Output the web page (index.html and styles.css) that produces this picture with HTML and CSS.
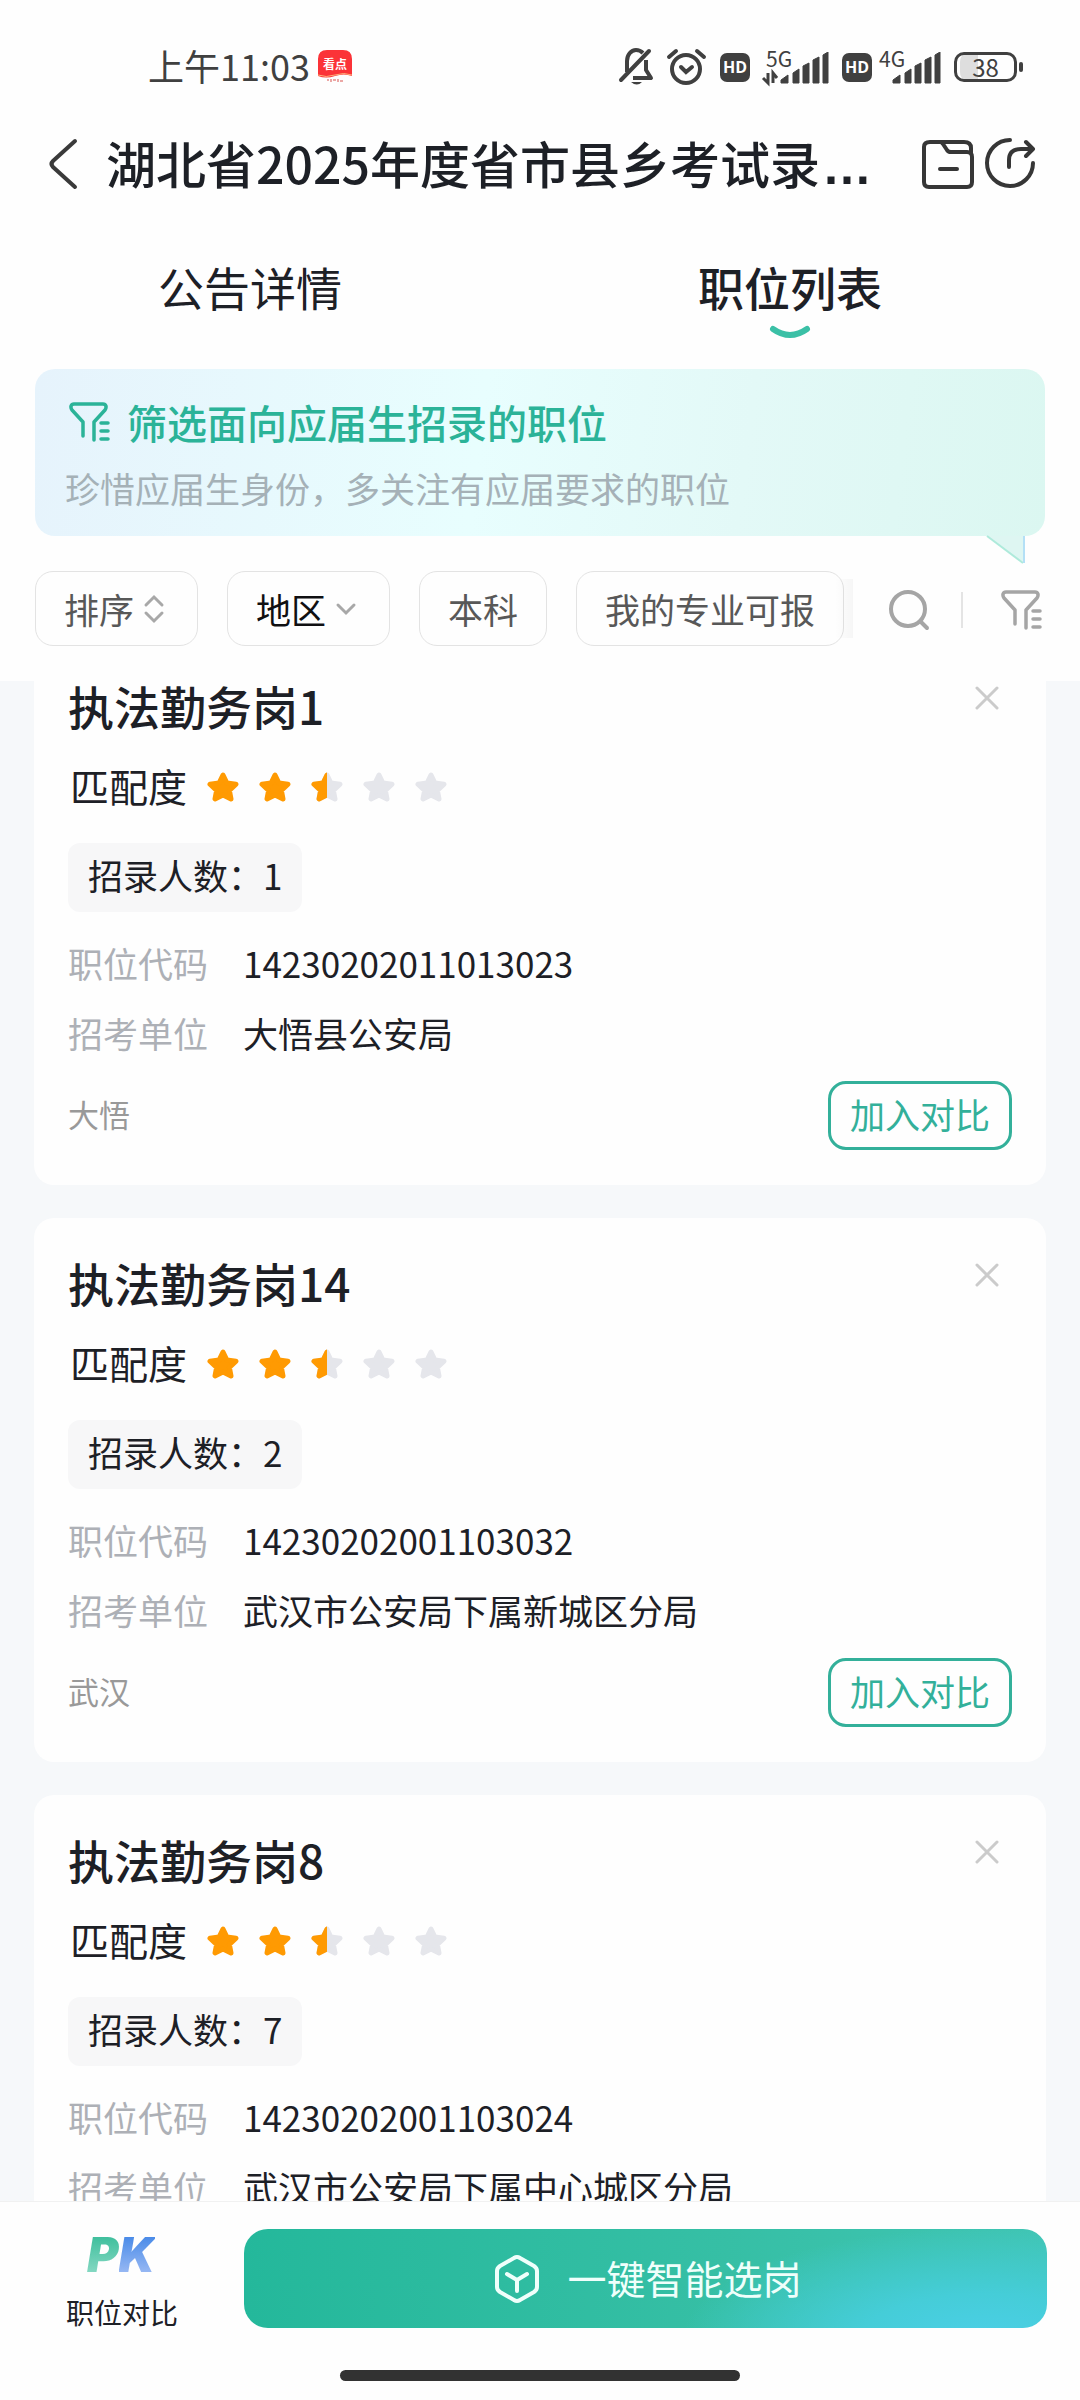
FILE: index.html
```html
<!DOCTYPE html>
<html lang="zh-CN">
<head>
<meta charset="utf-8">
<meta name="viewport" content="width=device-width, initial-scale=1">
<title>职位列表</title>
<link rel="stylesheet" href="styles.css">
</head>
<body>
<svg class="defs" aria-hidden="true">
  <defs>
    <symbol id="star" viewBox="0 0 32 32"><path d="M16 4l3.900 8 9.100 1.200-6.600 6.300 1.600 8.500-8-4-8 4 1.600-8.500L3 13.200l9.100-1.200z" fill="currentColor" stroke="currentColor" stroke-width="5" stroke-linejoin="round"/></symbol>
    <symbol id="half-star" viewBox="0 0 32 32">
      <clipPath id="left-half"><rect width="16" height="32"/></clipPath>
      <use href="#star" width="32" height="32" color="#e5e6eb"/>
      <use href="#star" width="32" height="32" color="#ff9a02" clip-path="url(#left-half)"/>
    </symbol>
    <symbol id="close" viewBox="0 0 24 24"><path d="M2 2l20 20M22 2L2 22" fill="none" stroke="#cbcbcb" stroke-width="3" stroke-linecap="round"/></symbol>
    <symbol id="filter" viewBox="0 0 42 40"><path d="M14 34V20L3 8C1 5 2 2 5 2h29c3 0 4 3 2 6l-11 12v18M32 21h7M32 29h7M32 37h7" fill="none" stroke="currentColor" stroke-width="3.500" stroke-linecap="round" stroke-linejoin="round"/></symbol>
    <symbol id="bars" viewBox="0 0 50 32"><path d="M1 31v-3l7-5v8zM13 31V21l6-4v14zM23 31V14l6-3v20zM33 31V8l6-3v26zM43 31V3l5-3v31z" fill="#404040" stroke="#404040" stroke-width="1" stroke-linejoin="round"/></symbol>
  </defs>
</svg>
<div class="app">
  <header class="top">
    <div class="status">
      <div class="status-left">
        <span class="clock">上午11:03</span>
        <svg width="34" height="34" viewBox="0 0 34 34" aria-hidden="true">
          <path d="M0 26V9Q0 0 9 0h16q9 0 9 9v17q-8-3-17 0t-17 0z" fill="#fb3338"/>
          <path d="M0 25q8 3 17 0t17 0" fill="none" stroke="#ffb27a" stroke-width="1"/>
          <text x="17" y="19" text-anchor="middle" class="badge-text">看点</text>
          <path d="M9 30h2M13 29v3M15 30h3M20 29v3M22 31h3" stroke="#d9534f" stroke-width="1"/>
        </svg>
      </div>
      <div class="status-right">
        <svg width="34" height="38" viewBox="0 0 34 38" fill="none" stroke="#404040" stroke-width="4" aria-hidden="true"><path d="M8 24V13C8 7 12 2 17 2c3 0 5 1 7 3M27 12v10l5 8H14" stroke-linejoin="round"/><path d="M2 32L30 3" stroke-linecap="round"/><path d="M12 34h11q-5 5-11 0z" fill="#404040" stroke="none"/></svg>
        <svg width="39" height="36" viewBox="0 0 39 36" fill="none" stroke="#404040" stroke-width="4" stroke-linecap="round" aria-hidden="true"><circle cx="19" cy="20" r="14"/><path d="M14 18l5 5 6-5M2 8l7-6M37 8l-7-6"/></svg>
        <div class="network wide">
          <span class="hd">HD</span>
          <svg width="66" height="34" viewBox="0 0 66 34" aria-hidden="true"><text x="4" y="17" class="net-text">5G</text><use href="#bars" x="18" y="2" width="50" height="32"/><path d="M6 23v10l-5-5M11 33V23l4 5" fill="none" stroke="#404040" stroke-width="3"/></svg>
        </div>
        <div class="network">
          <span class="hd">HD</span>
          <svg width="61" height="34" viewBox="0 0 61 34" aria-hidden="true"><text x="0" y="17" class="net-text">4G</text><use href="#bars" x="13" y="2" width="50" height="32"/></svg>
        </div>
        <div class="battery"><span class="cell">38</span><span class="cap"></span></div>
      </div>
    </div>

    <div class="title-bar">
      <button class="icon-button back" aria-label="返回"><svg width="32" height="54" viewBox="0 0 32 54"><path d="M27 4L5 24q-3 3 0 6l22 20" fill="none" stroke="#3a3a3a" stroke-width="4" stroke-linecap="round"/></svg></button>
      <h1>湖北省2025年度省市县乡考试录<span class="dots">…</span></h1>
      <div class="actions">
        <button class="icon-button" aria-label="资料"><svg width="52" height="50" viewBox="0 0 52 50" fill="none" stroke="#363636" stroke-width="4" stroke-linejoin="round" stroke-linecap="round"><path d="M18 3h24q7 0 7 6M8 3h10q2 0 3 2l4 6q1 2 4 2h16q5 0 5 5v25q0 5-5 5H7q-5 0-5-5V8q0-5 6-5zM49 9v6M18 30h17"/></svg></button>
        <button class="icon-button" aria-label="分享"><svg width="52" height="54" viewBox="0 0 52 54" fill="none" stroke="#363636" stroke-width="4" stroke-linejoin="round" stroke-linecap="round"><path d="M26 3A23 23 0 1 0 49 26"/><path d="M25 30V23Q25 12 37 12H48M42 5l7 7-7 7"/></svg></button>
      </div>
    </div>

    <nav class="tabs">
      <a class="tab" href="#notice">公告详情</a>
      <a class="tab active" href="#jobs" aria-current="page">职位列表<svg width="40" height="12" viewBox="0 0 40 12" aria-hidden="true"><path d="M3 3q17 12 34 0" fill="none" stroke="#3bc0a6" stroke-width="6" stroke-linecap="round"/></svg></a>
    </nav>

    <section class="banner">
      <h2><svg width="42" height="40"><use href="#filter"/></svg>筛选面向应届生招录的职位</h2>
      <p>珍惜应届生身份，多关注有应届要求的职位</p>
      <svg class="tail" width="38" height="28" viewBox="0 0 38 28" aria-hidden="true">
        <path d="M0 0h37v27z" fill="#def6f2"/><path d="M0 0l36 27" stroke="#aeeadb" stroke-width="2"/><path d="M37 0v27" stroke="#b4e0f6" stroke-width="2"/>
      </svg>
    </section>

    <div class="filters">
      <div class="chips">
        <button class="chip menu">排序<svg width="20" height="28" viewBox="0 0 20 28"><path d="M2 10l8-8 8 8M2 18l8 8 8-8" fill="none" stroke="#a8a8a8" stroke-width="3" stroke-linecap="round"/></svg></button>
        <button class="chip menu strong">地区<svg width="20" height="12" viewBox="0 0 20 12"><path d="M2 2l8 8 8-8" fill="none" stroke="#a8a8a8" stroke-width="3" stroke-linecap="round"/></svg></button>
        <button class="chip">本科</button>
        <button class="chip">我的专业可报</button>
      </div>
      <div class="tools">
        <button class="icon-button" aria-label="搜索"><svg width="40" height="40" viewBox="0 0 40 40" fill="none" stroke="#a5a5a5" stroke-width="4" stroke-linecap="round"><circle cx="19" cy="19" r="17"/><path d="M32 32l6 6"/></svg></button>
        <span class="divider"></span>
        <button class="icon-button" aria-label="筛选"><svg width="42" height="40"><use href="#filter"/></svg></button>
      </div>
    </div>
  </header>

  <main class="scroller" id="jobs">
    <div class="list">
      <article class="card">
        <div class="card-head"><h3>执法勤务岗1</h3><button class="close" aria-label="关闭"><svg width="24" height="24"><use href="#close"/></svg></button></div>
        <div class="rating"><span>匹配度</span><div class="stars"><svg class="on"><use href="#star"/></svg><svg class="on"><use href="#star"/></svg><svg><use href="#half-star"/></svg><svg><use href="#star"/></svg><svg><use href="#star"/></svg></div></div>
        <p class="tag">招录人数：1</p>
        <dl class="info"><dt>职位代码</dt><dd>14230202011013023</dd><dt>招考单位</dt><dd>大悟县公安局</dd></dl>
        <div class="card-foot"><span>大悟</span><button class="compare">加入对比</button></div>
      </article>
      <article class="card">
        <div class="card-head"><h3>执法勤务岗14</h3><button class="close" aria-label="关闭"><svg width="24" height="24"><use href="#close"/></svg></button></div>
        <div class="rating"><span>匹配度</span><div class="stars"><svg class="on"><use href="#star"/></svg><svg class="on"><use href="#star"/></svg><svg><use href="#half-star"/></svg><svg><use href="#star"/></svg><svg><use href="#star"/></svg></div></div>
        <p class="tag">招录人数：2</p>
        <dl class="info"><dt>职位代码</dt><dd>14230202001103032</dd><dt>招考单位</dt><dd>武汉市公安局下属新城区分局</dd></dl>
        <div class="card-foot"><span>武汉</span><button class="compare">加入对比</button></div>
      </article>
      <article class="card">
        <div class="card-head"><h3>执法勤务岗8</h3><button class="close" aria-label="关闭"><svg width="24" height="24"><use href="#close"/></svg></button></div>
        <div class="rating"><span>匹配度</span><div class="stars"><svg class="on"><use href="#star"/></svg><svg class="on"><use href="#star"/></svg><svg><use href="#half-star"/></svg><svg><use href="#star"/></svg><svg><use href="#star"/></svg></div></div>
        <p class="tag">招录人数：7</p>
        <dl class="info"><dt>职位代码</dt><dd>14230202001103024</dd><dt>招考单位</dt><dd>武汉市公安局下属中心城区分局</dd></dl>
      </article>
    </div>
  </main>

  <footer class="bottom">
    <div class="bottom-row">
      <a class="pk" href="#compare"><span class="pk-logo"><span class="pk-p">P</span><span class="pk-k">K</span></span>职位对比</a>
      <button class="primary"><svg width="44" height="48" viewBox="0 0 44 48" fill="none" stroke="#effffb" stroke-width="4" stroke-linejoin="round" stroke-linecap="round"><path d="M19 3q3-2 6 0l14 8q3 2 3 5v16q0 3-3 5l-14 8q-3 2-6 0L5 37q-3-2-3-5V16q0-3 3-5z"/><path d="M12 19l10 6 10-6M22 25v11"/></svg><span>一键智能选岗</span></button>
    </div>
    <div class="home-bar"></div>
  </footer>
</div>
</body>
</html>
```

FILE: styles.css
```css
* { box-sizing: border-box; }

body {
  margin: 0;
  background: #fefefe;
  color: #1d2026;
  font-family: "Noto Sans CJK SC", "Noto Sans", sans-serif;
  font-size: 35px;
  line-height: 50px;
}

h1, h2, h3, p, dl, dd { margin: 0; }
h1, h2, h3 { font-weight: 500; }
a { color: inherit; text-decoration: none; }
button { margin: 0; padding: 0; border: 0; background: none; color: inherit; font: inherit; }
svg { display: block; flex: none; overflow: visible; }
.defs { position: absolute; width: 0; height: 0; }
.icon-button { display: flex; }

.app { display: flex; flex-direction: column; height: 100vh; }
.top { flex: none; }

/* status bar */
.status {
  display: flex;
  align-items: center;
  justify-content: space-between;
  padding: 30px 57px 0 148px;
  height: 104px;
  color: #404040;
}
.status-left { display: flex; align-items: center; gap: 8px; }
.clock { padding-bottom: 4px; font-size: 36px; }
.badge-text { fill: #fff; font-size: 12px; font-weight: 700; }
.status-right { display: flex; align-items: center; gap: 14px; }
.network { display: flex; align-items: center; gap: 7px; }
.network.wide { gap: 12px; }
.net-text { fill: #404040; font-size: 21px; }
.hd {
  width: 30px;
  border-radius: 7px;
  background: #404040;
  color: #fff;
  font: 700 16px/29px "Open Sans", sans-serif;
  text-align: center;
}
.battery { display: flex; align-items: center; gap: 2px; }
.cell {
  width: 63px;
  border: 3px solid #404040;
  border-radius: 10px;
  background: linear-gradient(90deg, #dedede 18px, #fefefe 18px) content-box;
  padding: 0 3px;
  font-size: 24px;
  line-height: 24px;
  text-align: center;
}
.cap { width: 4px; height: 10px; border-radius: 2px; background: #404040; }

/* title */
.title-bar { display: flex; align-items: center; height: 120px; padding: 0 44px 0 48px; }
.back { width: 58px; }
h1 { flex: 1; font-size: 50px; line-height: 60px; white-space: nowrap; }
.dots { padding-left: 2px; font-family: "Liberation Sans", sans-serif; font-weight: 700; }
.actions { display: flex; align-items: center; gap: 10px; }

/* tabs */
.tabs { display: flex; padding: 32px 0 31px; }
.tab {
  flex: 1;
  display: flex;
  flex-direction: column;
  align-items: center;
  gap: 10px;
  min-height: 82px;
  padding-right: 40px;
  font-size: 46px;
  line-height: 60px;
}
.tab.active { font-weight: 500; }

/* banner */
.banner {
  position: relative;
  margin: 0 35px;
  padding: 25px 30px 23px;
  border-radius: 20px;
  background: linear-gradient(97deg, #e6f3fc, #e8fefe 44%, #e3f9f7 70%, #dbf7f1);
}
.banner h2 {
  display: flex;
  align-items: center;
  gap: 16px;
  padding-left: 4px;
  color: #2bb398;
  font-size: 40px;
  line-height: 56px;
}
.banner p { margin-top: 13px; color: #a5b1b7; }
.tail { position: absolute; top: 100%; right: 20px; }

/* filters */
.filters { display: flex; justify-content: space-between; padding: 35px 37px 35px 35px; }
.chips { position: relative; display: flex; gap: 29px; padding-right: 9px; }
.chips::after {
  content: "";
  position: absolute;
  top: 8px;
  right: 0;
  bottom: 8px;
  width: 18px;
  background: linear-gradient(90deg, transparent, rgba(0, 0, 0, .03));
}
.chip {
  display: flex;
  align-items: center;
  height: 75px;
  gap: 10px;
  padding: 0 28px;
  border: 1px solid #e3e3e3;
  border-radius: 18px;
  color: #585858;
  white-space: nowrap;
}
.chip.menu { padding-right: 33px; }
.chip.strong { color: #101012; }
.tools { display: flex; align-items: center; padding-top: 2px; color: #a5a5a5; }
.divider { width: 2px; height: 36px; margin: 0 38px 0 32px; background: #e4e4e4; }

/* job list, scrolled part of the way into its first card */
.scroller { flex: 1; min-height: 0; overflow: hidden; background: #f6f8fa; }
.list { display: flex; flex-direction: column; gap: 33px; margin-top: -40px; padding: 0 34px; }
.card { padding: 34px 34px 35px; border-radius: 20px; background: #fefefe; }
.card-head { display: flex; justify-content: space-between; }
h3 { font-size: 46px; line-height: 60px; }
.close { display: flex; align-items: center; justify-content: center; width: 51px; height: 46px; }
.rating { display: flex; align-items: center; gap: 20px; margin-top: 25px; font-size: 39px; padding-left: 2px; }
.stars { display: flex; gap: 20px; padding-top: 3px; color: #e5e6eb; }
.stars svg { width: 32px; height: 32px; }
.stars .on { color: #ff9a02; }
.tag {
  width: fit-content;
  margin-top: 33px;
  padding: 7px 20px 12px;
  border-radius: 12px;
  background: #f7f7f8;
}
.info { display: grid; grid-template-columns: auto 1fr; gap: 20px 35px; margin-top: 26px; }
.info dt { color: #adb0b6; }
.card-foot { display: flex; align-items: center; justify-content: space-between; margin-top: 23px; color: #999; font-size: 31px; }
.card-foot span { padding-bottom: 3px; }
.compare {
  padding: 5px 19px 8px;
  border: 3px solid #33b09a;
  border-radius: 18px;
  color: #33b09a;
  font-size: 35px;
}

/* bottom bar */
.bottom { flex: none; padding: 27px 0 19px; border-top: 1px solid #f1f1f1; }
.bottom-row { display: flex; gap: 66px; padding: 0 33px 0 66px; }
.pk {
  display: flex;
  flex-direction: column;
  align-items: center;
  width: 112px;
  font-size: 28px;
  line-height: 32px;
}
.pk-logo {
  margin-bottom: 15px;
  padding-right: 2px;
  font: italic 900 48px/52px Inter, sans-serif;
}
.pk-p, .pk-k { background: linear-gradient(#3fbf9d 20%, #8fdcc8 90%); background-clip: text; -webkit-background-clip: text; color: transparent; }
.pk-k { background-image: linear-gradient(#4a8be8 20%, #a3bff5 90%); }
.primary {
  flex: 1;
  display: flex;
  align-items: center;
  justify-content: center;
  gap: 28px;
  height: 99px;
  padding-left: 6px;
  border-radius: 24px;
  background:
    radial-gradient(ellipse 300px 110px at 92% 110%, #4bcfe6, #45cdd8 40%, rgba(69, 205, 216, 0)),
    linear-gradient(90deg, #24b89b, #36bfa5 60%, #40c5b4);
  color: #effffb;
  font-size: 39px;
}
.primary span { padding-bottom: 4px; }
.home-bar { width: 400px; height: 11px; margin: 42px auto 0; border-radius: 6px; background: #323232; }
```
